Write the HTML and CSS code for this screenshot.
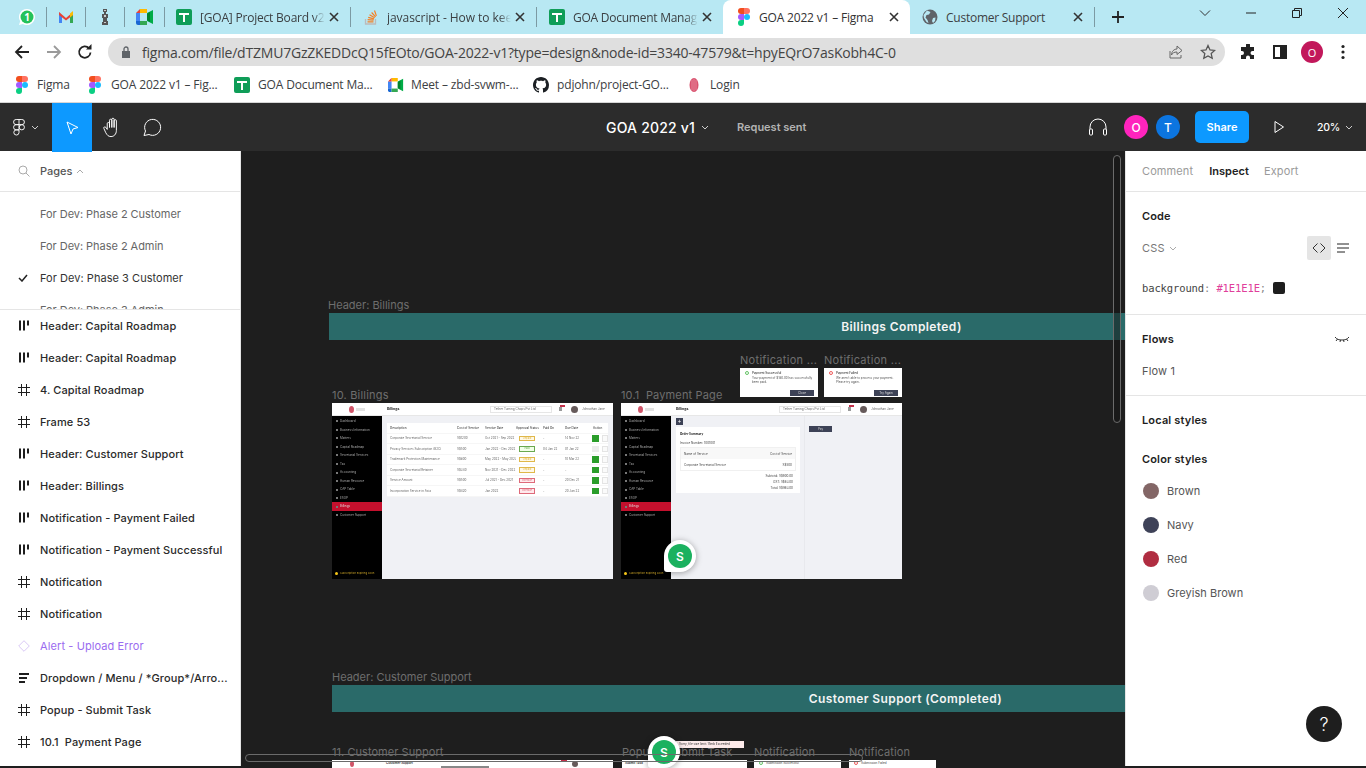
FILE: index.html
```html
<!DOCTYPE html>
<html lang="en">
<head>
<meta charset="utf-8">
<title>GOA 2022 v1 – Figma</title>
<link rel="stylesheet" href="styles.css">
</head>
<body>
<svg class="defs" width="0" height="0" aria-hidden="true">
  <defs>
    <symbol id="figma" viewBox="0 0 12 18">
      <path fill="#f24e1e" d="M3 0h3v6H3a3 3 0 0 1 0-6z"/>
      <path fill="#ff7262" d="M6 0h3a3 3 0 0 1 0 6H6z"/>
      <path fill="#a259ff" d="M3 6h3v6H3a3 3 0 0 1 0-6z"/>
      <circle fill="#1abcfe" cx="9" cy="9" r="3"/>
      <path fill="#0acf83" d="M3 12h3v3a3 3 0 1 1-3-3z"/>
    </symbol>
    <symbol id="sheet" viewBox="0 0 16 16">
      <rect width="16" height="16" rx="2" fill="#0f9d58"/>
      <path fill="#fff" d="M3 4h10v2H9v7H7V6H3z"/>
    </symbol>
    <symbol id="meet" viewBox="0 0 18 16">
      <path fill="#ffba00" d="M4 0h7v4H4z"/>
      <path fill="#4285f4" d="M0 4h4v8H0z"/>
      <path fill="#1967d2" d="M0 12h4v4H2a2 2 0 0 1-2-2z"/>
      <path fill="#34a853" d="M4 12h7v4H4z"/>
      <path fill="#00ac47" d="M11 4v8l6 3V1z"/>
      <path fill="#00832d" d="M11 5l3-2v10l-3-2z"/>
      <path fill="#ea4335" d="M4 0v4H0z"/>
    </symbol>
    <symbol id="close" viewBox="0 0 10 10">
      <path d="M1 1l8 8M9 1L1 9" stroke="#333" stroke-width="1.6" fill="none"/>
    </symbol>
    <symbol id="chev" viewBox="0 0 8 5">
      <path d="M1 1l3 3 3-3" stroke="currentColor" fill="none"/>
    </symbol>
    <symbol id="hash" viewBox="0 0 12 12">
      <path d="M3.500 0v12M8.500 0v12M0 3.500h12M0 8.500h12" stroke="#1e1e1e" fill="none"/>
    </symbol>
    <symbol id="cols" viewBox="0 0 12 12">
      <path d="M1 1h2v10H1zM5 1h2v10H5zM9 1h2v5H9z" fill="#1e1e1e" transform="translate(0 -0.500)"/>
    </symbol>
    <symbol id="rows" viewBox="0 0 12 12">
      <path d="M1 1h10v2H1zM1 5h8v2H1zM1 9h6v2H1z" fill="#1e1e1e"/>
    </symbol>
    <symbol id="diamond" viewBox="0 0 12 12">
      <path d="M6 .7L11.300 6 6 11.300.7 6z" fill="none" stroke="#d9c8f5"/>
    </symbol>
  </defs>
</svg>

<header class="tabstrip">
  <div class="pin">
    <svg class="ic16" viewBox="0 0 16 16"><path fill="#fff" d="M8 0a8 8 0 0 0-6.800 12.200L0 16l3.900-1.100A8 8 0 1 0 8 0z"/><circle cx="8" cy="8" r="6.500" fill="#25c25a"/><text x="8" y="11.500" class="wa-num">1</text></svg>
  </div>
  <div class="pin">
    <svg class="ic16" viewBox="0 0 16 16"><path d="M1 3v11h3V7z" fill="#4285f4"/><path d="M15 3v11h-3V7z" fill="#34a853"/><path d="M1 3l7 6 7-6v3L8 11.500 1 6z" fill="#ea4335"/><path d="M12 4.500L15 2v4l-3 2.500z" fill="#fbbc04"/></svg>
  </div>
  <div class="pin">
    <svg class="ic16" viewBox="0 0 16 16"><path fill="#555" d="M6 0h4v3H9v2h2v4h-1v3h1v4H5v-3h1V9H5V5h2V3H6z"/><path fill="#ccc" d="M7 1h2v1H7zM7 6h2v2H7zM7 13h2v1H7z"/></svg>
  </div>
  <div class="pin pin-last">
    <svg class="ic18" viewBox="0 0 18 16"><use href="#meet"/></svg>
  </div>
  <div class="tab tab-first tab-sep">
    <svg class="ic16"><use href="#sheet"/></svg>
    <span class="tab-title tab-fade tab-board">[GOA] Project Board v2</span>
    <svg class="tab-x"><use href="#close"/></svg>
  </div>
  <div class="tab tab-sep">
    <svg class="ic16" viewBox="0 0 16 16"><path d="M2.500 10v5h10v-5" fill="none" stroke="#bcbbbb" stroke-width="1.300"/><path d="M4.500 12.800h6M4.600 10.600l6 .6M5.200 8.300l5.800 1.600M6.500 5.800l5.200 3M8.600 3.500l4 4.300M11.500 1.500l1.900 5.400" stroke="#f48024" stroke-width="1.200" fill="none"/></svg>
    <span class="tab-title tab-fade tab-so">javascript - How to kee</span>
    <svg class="tab-x"><use href="#close"/></svg>
  </div>
  <div class="tab">
    <svg class="ic16"><use href="#sheet"/></svg>
    <span class="tab-title tab-fade">GOA Document Manag</span>
    <svg class="tab-x"><use href="#close"/></svg>
  </div>
  <div class="tab tab-active">
    <svg class="ic-figma"><use href="#figma"/></svg>
    <span class="tab-title">GOA 2022 v1 – Figma</span>
    <svg class="tab-x"><use href="#close"/></svg>
  </div>
  <div class="tab tab-sep tab-last">
    <svg class="ic16" viewBox="0 0 16 16"><circle cx="8" cy="8" r="7.500" fill="#5f6368"/><path fill="#b8e8f3" d="M5 1.500L8.500 3 7 5.500 4.500 6l-1 2.500L5.500 11l1 3-2-1-2.500-4-.5-3zM11 9l2.500-.5L13 12l-2 2-1-2z"/></svg>
    <span class="tab-title">Customer Support</span>
    <svg class="tab-x"><use href="#close"/></svg>
  </div>
  <svg class="new-tab" viewBox="0 0 14 14"><path d="M7 1v12M1 7h12" stroke="#222" stroke-width="1.800"/></svg>
  <div class="win">
    <svg class="win-ic" viewBox="0 0 12 12"><path d="M1 3.500l5 5 5-5" fill="none" stroke="#333"/></svg>
    <svg class="win-ic" viewBox="0 0 12 12"><path d="M1 6h10" stroke="#222" stroke-width="1"/></svg>
    <svg class="win-ic" viewBox="0 0 12 12"><path d="M1.500 3.500h7v7h-7zM3.500 3.500v-2h7v7h-2" fill="none" stroke="#222"/></svg>
    <svg class="win-ic" viewBox="0 0 12 12"><path d="M1 1l10 10M11 1L1 11" stroke="#222"/></svg>
  </div>
</header>

<div class="navbar">
  <svg class="nav-ic nav-back" viewBox="0 0 16 16"><path d="M15 8H2M8 2L2 8l6 6" fill="none" stroke="#222" stroke-width="1.800"/></svg>
  <svg class="nav-ic nav-fwd" viewBox="0 0 16 16"><path d="M1 8h13M8 2l6 6-6 6" fill="none" stroke="#9a9a9a" stroke-width="1.800"/></svg>
  <svg class="nav-ic nav-reload" viewBox="0 0 16 16"><path d="M13.500 8.500A5.700 5.700 0 1 1 12 4.200" fill="none" stroke="#222" stroke-width="1.800"/><path d="M9 5.500h5.500V0z" fill="#222"/></svg>
  <div class="omni">
    <svg class="lock" viewBox="0 0 10 12"><path fill="#5f6368" d="M1 5h8v7H1z"/><path d="M3 5V3a2 2 0 0 1 4 0v2" fill="none" stroke="#5f6368" stroke-width="1.300"/></svg>
    <span class="url">figma.com/file/dTZMU7GzZKEDDcQ15fEOto/GOA-2022-v1?type=design&amp;node-id=3340-47579&amp;t=hpyEQrO7asKobh4C-0</span>
    <svg class="omni-ic" viewBox="0 0 16 16"><path d="M2 7v7h11v-3" fill="none" stroke="#666"/><path d="M9 2l5 4.500-5 4V8C6 8 4.500 9 3.500 11 3.500 7.500 6 5 9 5z" fill="none" stroke="#666"/></svg>
    <svg class="omni-ic" viewBox="0 0 16 16"><path d="M8 1.500l2 4.400 4.700.5-3.500 3.200 1 4.700L8 11.900l-4.200 2.400 1-4.700-3.500-3.200L6 5.900z" fill="none" stroke="#555" stroke-width="1.300"/></svg>
  </div>
  <svg class="nav-ic nav-ext" viewBox="0 0 16 16"><path fill="#222" d="M6 1a2 2 0 0 1 4 0v2h4v4h-1.500a2 2 0 0 0 0 4H14v4h-4v-1.500a2 2 0 0 0-4 0V15H1v-4h1a2 2 0 0 0 0-4H1V3h5z"/></svg>
  <svg class="nav-ic nav-side" viewBox="0 0 14 14"><path fill-rule="evenodd" fill="#222" d="M0 0h14v14H0zM2 2v10h5V2z"/></svg>
  <div class="avatar-o">O</div>
  <svg class="nav-ic nav-more" viewBox="0 0 4 16"><circle cx="2" cy="2.500" r="1.600" fill="#222"/><circle cx="2" cy="8" r="1.600" fill="#222"/><circle cx="2" cy="13.500" r="1.600" fill="#222"/></svg>
</div>

<nav class="bookmarks">
  <div class="bm bm-1"><svg class="ic-figma"><use href="#figma"/></svg><span>Figma</span></div>
  <div class="bm bm-2"><svg class="ic-figma"><use href="#figma"/></svg><span>GOA 2022 v1 – Fig...</span></div>
  <div class="bm bm-3"><svg class="ic16"><use href="#sheet"/></svg><span>GOA Document Ma...</span></div>
  <div class="bm bm-4"><svg class="ic16" viewBox="0 0 18 16"><use href="#meet"/></svg><span>Meet – zbd-svwm-...</span></div>
  <div class="bm bm-5"><svg class="ic16" viewBox="0 0 16 16"><path fill="#1b1f23" d="M8 0C3.580 0 0 3.580 0 8c0 3.540 2.290 6.530 5.470 7.590.4.070.55-.17.55-.38 0-.19-.01-.82-.01-1.490-2.010.37-2.530-.49-2.690-.94-.09-.23-.48-.94-.82-1.130-.28-.15-.68-.52-.01-.53.63-.01 1.080.58 1.230.82.72 1.210 1.870.87 2.330.66.070-.52.28-.87.51-1.070-1.780-.2-3.640-.89-3.640-3.950 0-.87.31-1.590.82-2.150-.08-.2-.36-1.020.08-2.120 0 0 .67-.21 2.200.82.64-.18 1.320-.27 2-.27.68 0 1.360.09 2 .27 1.530-1.040 2.200-.82 2.200-.82.44 1.100.16 1.920.08 2.120.51.56.82 1.270.82 2.150 0 3.070-1.870 3.750-3.650 3.950.29.25.54.73.54 1.480 0 1.070-.01 1.930-.01 2.200 0 .21.15.46.55.38A8.013 8.013 0 0 0 16 8c0-4.420-3.580-8-8-8z"/></svg><span>pdjohn/project-GO...</span></div>
  <div class="bm bm-6"><svg class="ic16" viewBox="0 0 16 16"><ellipse cx="8" cy="8" rx="4.500" ry="7" fill="#d9536f"/><path d="M6 3v10M8 2v12M10 3v10" stroke="#ec9bac" stroke-width=".7"/></svg><span>Login</span></div>
</nav>

<div class="figbar">
  <div class="fig-left">
    <div class="fig-menu">
      <svg class="fig-logo" viewBox="0 0 12 18"><path d="M3 .5h6a2.750 2.750 0 0 1 0 5.500H3A2.750 2.750 0 0 1 3 .5zM3 6h3v5.500H3A2.750 2.750 0 0 1 3 6zM3 11.500h3v3A2.750 2.750 0 1 1 3 11.500zM6 .5V6" fill="none" stroke="#fff"/><circle cx="9" cy="8.750" r="2.750" fill="none" stroke="#fff"/></svg>
      <svg class="chev chev-light"><use href="#chev"/></svg>
    </div>
    <div class="tool tool-on"><svg class="tool-ic" viewBox="0 0 18 18"><path d="M4 3l11 5.500-5 1.500-2 5z" fill="none" stroke="#fff"/></svg></div>
    <div class="tool"><svg class="tool-ic-l" viewBox="0 0 20 22"><path d="M5 13V7a1.200 1.200 0 0 1 2.400 0v4V3.500a1.200 1.200 0 0 1 2.400 0V11 2.500a1.200 1.200 0 0 1 2.400 0V11 4a1.200 1.200 0 0 1 2.400 0v10c0 4-2.500 6.500-5.600 6.500-3 0-4-1.500-5.500-4L1.500 12c-.7-1.300 1-2.300 2-1.200z" fill="none" stroke="#fff"/></svg></div>
    <div class="tool"><svg class="tool-ic-l" viewBox="0 0 20 20"><path d="M2 18l1.500-4.500A8 8 0 1 1 7 17z" fill="none" stroke="#fff" stroke-linejoin="round"/></svg></div>
  </div>
  <div class="fig-center">
    <span class="fig-title">GOA 2022 v1</span>
    <svg class="chev chev-light"><use href="#chev"/></svg>
    <span class="fig-status">Request sent</span>
  </div>
  <div class="fig-right">
    <svg class="headset" viewBox="0 0 20 20"><path d="M2 16v-6a8 8 0 0 1 16 0v6" fill="none" stroke="#fff"/><rect x="1.500" y="12" width="3" height="6" rx="1" fill="#2c2c2c" stroke="#fff"/><rect x="15.500" y="12" width="3" height="6" rx="1" fill="#2c2c2c" stroke="#fff"/></svg>
    <div class="user user-o">O</div>
    <div class="user user-t">T</div>
    <div class="share">Share</div>
    <svg class="play" viewBox="0 0 12 14"><path d="M2 1.500l8.500 5.500L2 12.500z" fill="none" stroke="#fff"/></svg>
    <span class="zoom">20%</span>
    <svg class="chev chev-light"><use href="#chev"/></svg>
  </div>
</div>

<main class="workspace">
  <aside class="left">
    <div class="pages-head">
      <svg class="search" viewBox="0 0 12 12"><circle cx="5" cy="5" r="4" fill="none" stroke="#aaa"/><path d="M8 8l3.500 3.500" stroke="#aaa"/></svg>
      <span class="pages-title">Pages</span>
      <svg class="chev chev-up"><use href="#chev"/></svg>
    </div>
    <div class="pages">
      <div class="page">For Dev: Phase 2 Customer</div>
      <div class="page">For Dev: Phase 2 Admin</div>
      <div class="page page-on"><svg class="check" viewBox="0 0 10 8"><path d="M1 4l3 3 5-6" fill="none" stroke="#222" stroke-width="1.500"/></svg>For Dev: Phase 3 Customer</div>
      <div class="page">For Dev: Phase 3 Admin</div>
    </div>
    <div class="layers">
      <div class="layer"><svg class="lay-ic"><use href="#cols"/></svg>Header: Capital Roadmap</div>
      <div class="layer"><svg class="lay-ic"><use href="#cols"/></svg>Header: Capital Roadmap</div>
      <div class="layer"><svg class="lay-ic"><use href="#hash"/></svg>4. Capital Roadmap</div>
      <div class="layer"><svg class="lay-ic"><use href="#hash"/></svg>Frame 53</div>
      <div class="layer"><svg class="lay-ic"><use href="#cols"/></svg>Header: Customer Support</div>
      <div class="layer"><svg class="lay-ic"><use href="#cols"/></svg>Header: Billings</div>
      <div class="layer"><svg class="lay-ic"><use href="#cols"/></svg>Notification - Payment Failed</div>
      <div class="layer"><svg class="lay-ic"><use href="#cols"/></svg>Notification - Payment Successful</div>
      <div class="layer"><svg class="lay-ic"><use href="#hash"/></svg>Notification</div>
      <div class="layer"><svg class="lay-ic"><use href="#hash"/></svg>Notification</div>
      <div class="layer layer-comp"><svg class="lay-ic"><use href="#diamond"/></svg>Alert - Upload Error</div>
      <div class="layer"><svg class="lay-ic"><use href="#rows"/></svg>Dropdown / Menu / *Group*/Arro...</div>
      <div class="layer"><svg class="lay-ic"><use href="#hash"/></svg>Popup - Submit Task</div>
      <div class="layer"><svg class="lay-ic"><use href="#hash"/></svg>10.1  Payment Page</div>
    </div>
  </aside>

  <section class="canvas">
    <span class="label l-hb">Header: Billings</span>
    <div class="banner b-bill">Billings Completed)</div>

    <span class="label l-n1">Notification ...</span>
    <span class="label l-n2">Notification ...</span>
    <span class="label l-10">10. Billings</span>
    <span class="label l-101">10.1  Payment Page</span>

    <div class="note n-ok">
      <div class="note-t"><i class="dot dot-g"></i>Payment Successful</div>
      <p>Your payment of $180.00 has successfully been paid.</p>
      <b class="note-b">Close</b>
    </div>
    <div class="note n-bad">
      <div class="note-t"><i class="dot dot-r"></i>Payment Failed</div>
      <p>We aren't able to process your payment. Please try again.</p>
      <b class="note-b">Try Again</b>
    </div>

    <div class="frame f-bill">
      <div class="fh">
        <div class="fh-logo"><i></i></div>
        <strong>Billings</strong>
        <span class="fh-sel">Tether Turning Chops Pvt Ltd</span>
        <i class="fh-bell"></i>
        <i class="fh-ava"></i>
        <span class="fh-name">Johnathan Jane</span>
      </div>
      <div class="fb">
        <div class="side">
          <span>Dashboard</span><span>Business Information</span><span>Matters</span><span>Capital Roadmap</span><span>Secretarial Services</span><span>Tax</span><span>Accounting</span><span>Human Resource</span><span>CAP Table</span><span>ESOP</span><span class="side-on">Billings</span><span>Customer Support</span>
          <em>Subscription Expiring Soon</em>
        </div>
        <div class="content">
          <div class="bill-card">
            <div class="brow brow-h"><span>Description</span><span>Cost of Service</span><span>Service Date</span><span>Approval Status</span><span>Paid On</span><span>Due Date</span><span class="act-h">Action</span></div>
            <div class="brow"><span>Corporate Secretarial Service</span><span>S$1200</span><span>Oct 2021 - Sep 2022</span><span class="bdg bdg-y">Unpaid</span><span>-</span><span>14 Nov 22</span><span class="acts"><i class="act-g"></i><i class="act-l"></i></span></div>
            <div class="brow"><span>Privacy Services Subscription (B2C)</span><span>S$500</span><span>Jan 2022 - Dec 2022</span><span class="bdg bdg-g">Paid</span><span>04 Jan 22</span><span>01 Jan 22</span><span class="acts"><i class="act-d"></i><i class="act-l"></i></span></div>
            <div class="brow"><span>Trademark Protection Maintenance</span><span>S$800</span><span>May 2022 - May 2023</span><span class="bdg bdg-y">Unpaid</span><span>-</span><span>10 Mar 22</span><span class="acts"><i class="act-g"></i><i class="act-l"></i></span></div>
            <div class="brow"><span>Corporate Secretarial Retainer</span><span>S$340</span><span>Nov 2021 - Dec 2022</span><span class="bdg bdg-y">Unpaid</span><span>-</span><span>-</span><span class="acts"><i class="act-g"></i><i class="act-l"></i></span></div>
            <div class="brow"><span>Service Amount</span><span>S$500</span><span>Jul 2021 - Dec 2021</span><span class="bdg bdg-r">Overdue</span><span>-</span><span>20 Dec 21</span><span class="acts"><i class="act-g"></i><i class="act-l"></i></span></div>
            <div class="brow"><span>Incorporation Service in Asia</span><span>S$420</span><span>Jan 2022</span><span class="bdg bdg-r">Overdue</span><span>-</span><span>20 Jan 22</span><span class="acts"><i class="act-g"></i><i class="act-l"></i></span></div>
          </div>
        </div>
      </div>
    </div>

    <div class="frame f-pay">
      <div class="fh">
        <div class="fh-logo"><i></i></div>
        <strong>Billings</strong>
        <span class="fh-sel">Tether Turning Chops Pvt Ltd</span>
        <i class="fh-bell"></i>
        <i class="fh-ava"></i>
        <span class="fh-name">Johnathan Jane</span>
      </div>
      <div class="fb">
        <div class="side">
          <span>Dashboard</span><span>Business Information</span><span>Matters</span><span>Capital Roadmap</span><span>Secretarial Services</span><span>Tax</span><span>Accounting</span><span>Human Resource</span><span>CAP Table</span><span>ESOP</span><span class="side-on">Billings</span><span>Customer Support</span>
          <em>Subscription Expiring Soon</em>
        </div>
        <div class="content content-pay">
          <div class="pay-main">
            <i class="pay-back">+</i>
            <div class="order">
              <strong>Order Summary</strong>
              <div class="inv">Invoice Number:  1001001</div>
              <div class="ord-t">
                <div class="ord-r ord-h"><span>Name of Service</span><span>Cost of Service</span></div>
                <div class="ord-r"><span>Corporate Secretarial Service</span><span>S$500</span></div>
              </div>
              <div class="tot"><span>Subtotal:  S$900.00</span><span>GST:  S$63.00</span><span>Total:  S$963.00</span></div>
            </div>
          </div>
          <div class="pay-side"><b class="pay-btn">Pay</b></div>
        </div>
      </div>
    </div>

    <div class="cursor c-one"><span>S</span></div>

    <span class="label l-hc">Header: Customer Support</span>
    <div class="banner b-cust">Customer Support (Completed)</div>

    <span class="label l-11">11. Customer Support</span>
    <span class="label l-pop">Popup - Submit Task</span>
    <span class="label l-n3">Notification</span>
    <span class="label l-n4">Notification</span>

    <div class="stub s-a"><i class="stub-logo"></i><strong>Customer Support</strong><i class="stub-dark"></i><i class="stub-bell"></i><i class="stub-ava"></i></div>
    <div class="stub s-b"><strong>Submit Task</strong></div>
    <div class="stub s-c"><i class="dot dot-g"></i>Submission Successful</div>
    <div class="stub s-d"><i class="dot dot-r"></i>Submission Failed</div>

    <div class="pink">Sorry, file size limit: 15mb Exceeded</div>
    <div class="cursor c-two"><span>S</span></div>

    <div class="vscroll"></div>
    <div class="hscroll"></div>
  </section>

  <aside class="right">
    <div class="tabs3"><span class="t-mute">Comment</span><span class="t-on">Inspect</span><span class="t-mute t-export">Export</span></div>
    <div class="r-sec r-code">
      <h3>Code</h3>
      <div class="css-row">
        <span class="css-name">CSS</span>
        <svg class="chev chev-up flip"><use href="#chev"/></svg>
        <div class="code-btn"><svg class="code-ic" viewBox="0 0 14 12"><path d="M5.500 1.500L1 6l4.500 4.500M8.500 1.500L13 6l-4.500 4.500" fill="none" stroke="#333"/></svg></div>
        <svg class="list-ic" viewBox="0 0 12 10"><path d="M0 1h12M0 5h12M0 9h8" stroke="#222"/></svg>
      </div>
      <div class="code-line"><span class="code-text"><span class="c-prop">background</span><span class="c-p">:</span> <span class="c-val">#1E1E1E</span><span class="c-p">;</span></span><i class="c-swatch"></i></div>
    </div>
    <div class="r-sec r-flows">
      <div class="flows-h"><h3>Flows</h3><svg class="eye" viewBox="0 0 14 7"><path d="M0 1c2 2.500 4 3 7 3s5-.5 7-3M2.500 3L1 5M5.500 4L5 6M8.500 4L9 6M11.500 3L13 5" fill="none" stroke="#333"/></svg></div>
      <div class="flow1">Flow 1</div>
    </div>
    <div class="r-sec r-styles">
      <h3>Local styles</h3>
      <h3 class="h-color">Color styles</h3>
      <div class="sw"><i class="sw-brown"></i>Brown</div>
      <div class="sw"><i class="sw-navy"></i>Navy</div>
      <div class="sw"><i class="sw-red"></i>Red</div>
      <div class="sw"><i class="sw-grey"></i>Greyish Brown</div>
    </div>
    <div class="help">?</div>
  </aside>
</main>
</body>
</html>
```

FILE: styles.css
```css
* { box-sizing: border-box; }
html, body { margin: 0; height: 768px; overflow: hidden; }
body { background: #1e1e1e; font-family: Inter, "Liberation Sans", sans-serif; display: flex; flex-direction: column; }
.defs { position: absolute; }
svg { display: block; flex: none; }
i, em { font-style: normal; }
h3 { margin: 0; font-size: 11px; font-weight: 600; color: #1e1e1e; letter-spacing: .15px; }

/* Chrome */
.ic16 { width: 16px; height: 16px; }
.ic18 { width: 18px; height: 16px; }
.ic-figma { width: 12px; height: 18px; }
.wa-num { font: 700 10px "Open Sans", sans-serif; fill: #fff; text-anchor: middle; }
.tabstrip { height: 34px; background: #b8e8f3; display: flex; padding-left: 8px; flex: none; font-family: "Open Sans", sans-serif; }
.pin { width: 39px; height: 34px; display: flex; align-items: center; justify-content: center; position: relative; border-right: 1px solid #7c9aa3; background-clip: padding-box; }
.pin, .tab-sep { border-image: linear-gradient(#b8e8f3 8px, #7c9aa3 8px, #7c9aa3 26px, #b8e8f3 26px) 1; }
.pin-last { width: 40px; }
.tab { width: 186px; height: 34px; display: flex; align-items: center; padding: 0 11px 0 12px; gap: 8px; font-size: 12px; color: #3c4043; letter-spacing: -.25px; }
.tab-first { padding-left: 11px; }
.tab-sep { border-right: 1px solid #7c9aa3; }
.tab-active { background: #fff; width: 187px; border-radius: 8px 8px 0 0; color: #333; padding-left: 15px; gap: 9px; letter-spacing: -.18px; }
.tab-last { width: 185px; }
.tab-title { flex: 1; min-width: 0; white-space: nowrap; }
.tab-fade { margin-right: -7px; -webkit-mask-image: linear-gradient(90deg, #000 calc(100% - 12px), transparent); mask-image: linear-gradient(90deg, #000 calc(100% - 12px), transparent); }
.tab-board { letter-spacing: -.2px; }
.tab-so { letter-spacing: -.05px; }
.tab-x { width: 10px; height: 10px; margin-left: 3px; }
.new-tab { width: 14px; height: 14px; margin: 10px 0 0 16px; }
.win { margin-left: auto; display: flex; align-items: flex-start; padding: 7px 17px 0 0; gap: 34px; }
.win-ic { width: 12px; height: 12px; }
.navbar { height: 34px; background: #fff; display: flex; align-items: center; flex: none; padding: 2px 0 0 14px; }
.nav-ic { width: 16px; height: 16px; }
.nav-fwd { margin-left: 16px; }
.nav-reload { margin-left: 15px; }
.omni { margin-left: 15px; width: 1117px; height: 28px; border-radius: 14px; background: #dfdfdf; display: flex; align-items: center; padding: 0 9px 0 13px; }
.lock { width: 10px; height: 12px; }
.url { flex: 1; margin-left: 11px; font: 14px "Open Sans", sans-serif; letter-spacing: -.21px; color: #444; white-space: nowrap; overflow: hidden; }
.omni-ic { width: 16px; height: 16px; margin-left: 16px; }
.nav-ext { margin-left: 15px; }
.nav-side { margin-left: 17px; width: 14px; height: 14px; }
.avatar-o { width: 22px; height: 22px; margin-left: 14px; border-radius: 50%; background: #c2185b; color: #fff; font: 11px "Open Sans", sans-serif; display: flex; align-items: center; justify-content: center; }
.nav-more { width: 4px; margin-left: 18px; }
.bookmarks { height: 35px; background: #fff; border-bottom: 1px solid #d6d6d6; display: flex; align-items: center; flex: none; padding: 0 0 1px 16px; font: 12px "Open Sans", sans-serif; color: #3c4043; letter-spacing: -.15px; }
.bm { display: flex; align-items: center; gap: 10px; white-space: nowrap; }
.bm-1 { width: 73px; gap: 9px; }
.bm-2 { width: 145px; }
.bm-3 { width: 154px; gap: 8px; }
.bm-4 { width: 145px; gap: 7px; }
.bm-5 { width: 153px; gap: 8px; }
.bm-6 { gap: 8px; }

/* Figma toolbar */
.figbar { height: 48px; background: #2c2c2c; display: flex; align-items: stretch; flex: none; position: relative; z-index: 2; color: #fff; }
.fig-left { display: flex; width: 480px; }
.fig-menu { width: 52px; display: flex; align-items: center; padding-left: 13px; gap: 6px; }
.fig-logo { width: 12px; height: 17px; }
.chev { width: 8px; height: 5px; }
.chev-light { color: #ccc; }
.tool { width: 40px; height: 49px; display: flex; align-items: center; justify-content: center; }
.tool-on { background: #0d99ff; }
.tool-ic { width: 18px; height: 18px; }
.tool-ic-l { width: 20px; height: 21px; }
.fig-center { display: flex; align-items: center; padding-left: 126px; flex: none; width: 500px; }
.fig-title { font-size: 14px; font-weight: 500; color: #fff; letter-spacing: .2px; }
.fig-center .chev { margin-left: 6px; }
.fig-status { margin-left: 28px; font-size: 11px; font-weight: 600; color: #b3b3b3; letter-spacing: -.02px; }
.fig-right { flex: 1; display: flex; align-items: center; padding-left: 108px; }
.headset { width: 20px; height: 20px; }
.user { width: 24px; height: 24px; border-radius: 50%; display: flex; align-items: center; justify-content: center; font-size: 12px; font-weight: 500; }
.user-o { background: #ff24bd; margin-left: 16px; }
.user-t { background: #0c75e0; margin-left: 8px; }
.share { width: 54px; height: 32px; margin-left: 15px; border-radius: 5px; background: #0d99ff; display: flex; align-items: center; justify-content: center; font-size: 11px; font-weight: 600; }
.play { width: 12px; height: 14px; margin-left: 24px; }
.zoom { margin-left: 32px; font-size: 10.500px; font-weight: 500; letter-spacing: -.2px; }
.fig-right .chev { margin-left: 5px; }

/* Workspace */
.workspace { flex: 1; display: flex; min-height: 0; position: relative; }
.left { width: 241px; height: 615px; background: #fff; border-right: 1px solid #e5e5e5; display: flex; flex-direction: column; flex: none; }
.pages-head { height: 41px; border-bottom: 1px solid #e5e5e5; display: flex; align-items: center; padding-left: 18px; flex: none; }
.search { width: 12px; height: 12px; }
.pages-title { margin-left: 10px; font-size: 11px; font-weight: 500; color: #555; }
.chev-up { color: #aaa; margin-left: 4px; transform: rotate(180deg); }
.chev-up.flip { transform: none; }
.pages { height: 118px; padding-top: 6px; border-bottom: 1px solid #e5e5e5; overflow: hidden; flex: none; }
.page { height: 32px; display: flex; align-items: center; padding-left: 40px; position: relative; font-size: 11px; color: #666; letter-spacing: -.04px; white-space: nowrap; }
.page-on { color: #333; letter-spacing: .04px; }
.check { position: absolute; left: 18px; top: 12px; width: 10px; height: 8px; }
.layers { flex: 1; overflow: hidden; }
.layer { height: 32px; display: flex; align-items: center; padding-left: 40px; position: relative; font-size: 11px; font-weight: 500; color: #2a2a2a; letter-spacing: .1px; white-space: pre; }
.lay-ic { position: absolute; left: 18px; top: 10px; width: 12px; height: 12px; }
.layer-comp { color: #9b6cf0; font-weight: 400; }

/* Canvas */
.canvas { flex: 1; height: 617px; background: #1e1e1e; position: relative; overflow: hidden; }
.label { position: absolute; font-size: 11px; line-height: 14px; color: #6e6e6e; white-space: pre; }
.l-hb { left: 87px; top: 147px; }
.l-n1 { left: 499px; top: 202px; letter-spacing: .3px; }
.l-n2 { left: 583px; top: 202px; letter-spacing: .3px; }
.l-10 { left: 91px; top: 237px; letter-spacing: .2px; }
.l-101 { left: 380px; top: 237px; letter-spacing: .15px; }
.l-hc { left: 91px; top: 519px; }
.l-11 { left: 91px; top: 594px; letter-spacing: .05px; }
.l-pop { left: 381px; top: 594px; letter-spacing: .1px; }
.l-n3 { left: 513px; top: 594px; letter-spacing: .1px; }
.l-n4 { left: 608px; top: 594px; letter-spacing: .1px; }
.banner { position: absolute; height: 27px; background: #2a6a69; color: #f4f4f4; font-size: 12px; font-weight: 600; display: flex; align-items: center; justify-content: center; letter-spacing: .4px; }
.b-bill { left: 88px; top: 162px; width: 1145px; }
.b-cust { left: 91px; top: 534px; width: 1147px; }

.note { position: absolute; top: 217px; width: 78px; height: 29px; background: #fff; padding: 3px 4px; font-size: 3px; line-height: 4px; color: #555; filter: blur(.3px); }
.n-ok { left: 499px; }
.n-bad { left: 583px; }
.note p { margin: 1px 0 0 8px; width: 62px; }
.note-t { display: flex; align-items: center; gap: 3px; color: #333; font-weight: 500; padding-left: 1px; }
.dot { width: 4px; height: 4px; border-radius: 50%; flex: none; display: block; }
.dot-g { border: 1px solid #65c466; }
.dot-r { border: 1px solid #ef5b5b; }
.note-b { position: absolute; right: 4px; bottom: 1px; width: 24px; height: 6px; background: #3d4256; color: #ddd; font-weight: 400; text-align: center; line-height: 6px; }

.frame { position: absolute; top: 252px; width: 281px; height: 176px; background: #f0f1f5; display: flex; flex-direction: column; color: #666; font-size: 3px; white-space: nowrap; filter: blur(.3px); }
.f-bill { left: 91px; }
.f-pay { left: 380px; }
.fh { height: 13px; background: #fff; display: flex; align-items: center; flex: none; border-bottom: 1px solid #e7e7e7; }
.fh-logo { width: 50px; display: flex; align-items: center; justify-content: flex-start; padding-left: 17px; gap: 2px; }
.fh-logo i { width: 5px; height: 7px; border-radius: 50%; background: #d05468; display: block; }
.fh-logo::after { content: ""; width: 9px; height: 3px; background: #e2e2e2; display: block; }
.fh strong { margin-left: 5px; width: 103px; color: #222; font-size: 3.500px; }
.fh-sel { width: 62px; height: 7px; border: 1px solid #e6e6e6; padding-left: 3px; line-height: 5px; }
.fh-bell { width: 3px; height: 4px; margin-left: 7px; background: #999; display: block; position: relative; }
.fh-bell::after { content: ""; position: absolute; left: 1px; top: -2px; width: 5px; height: 2px; background: #c4304a; display: block; }
.fh-ava { width: 7px; height: 7px; margin-left: 9px; border-radius: 50%; background: #665a5a; display: block; }
.fh-name { margin-left: 4px; }
.fb { flex: 1; display: flex; min-height: 0; }
.side { width: 50px; background: #000; color: #aaa; padding-top: 1px; position: relative; flex: none; display: flex; flex-direction: column; }
.side span { height: 8.550px; padding-left: 8px; line-height: 8.550px; flex: none; position: relative; }
.side span::before { content: ""; position: absolute; left: 3.500px; top: 3.250px; width: 2px; height: 2px; background: #777; display: block; }
.side .side-on { background: #c4102d; color: #ddd; }
.side em { position: absolute; left: 3px; bottom: 4px; color: #c9a227; padding-left: 5px; font-size: 2.700px; }
.side em::before { content: ""; position: absolute; left: 0; top: .5px; width: 3px; height: 3px; border-radius: 50%; background: #f5c518; }
.content { flex: 1; min-width: 0; padding: 7px 5px 0 5px; }
.bill-card { height: 74px; background: #fff; }
.brow { height: 10.500px; display: grid; grid-template-columns: 67px 28px 31px 27px 22px 27px 16px; padding-left: 3px; align-items: center; border-bottom: .5px solid #f6f6f6; }
.brow > span { overflow: hidden; }
.brow-h { color: #444; font-weight: 500; }
.brow .acts { display: flex; gap: 3px; overflow: visible; }
.brow .act-h { overflow: visible; padding-left: 1px; }
.brow .bdg { width: 16px; height: 5.500px; line-height: 4.500px; margin-left: 3px; text-align: center; border: .5px solid; font-size: 2.500px; }
.bdg-y { background: #fff8e6; border-color: #fdeec8; color: #e0b84a; }
.bdg-g { background: #f1ffe8; border-color: #a8e08a; color: #6aa84f; }
.bdg-r { background: #ffe9ec; border-color: #f4a9b4; color: #de6a7a; }
.acts i { width: 6.500px; height: 6.500px; display: block; flex: none; }
.act-g { background: #2a9d2a; }
.act-l { background: #fafafa; border: .5px solid #e4e4e4; }
.act-d { background: #ececec; }
.content-pay { display: flex; padding: 0; }
.pay-main { width: 134px; padding: 2px 5px 0 5px; border-right: 1px solid #e8e9ed; flex: none; }
.pay-back { width: 7px; height: 7px; background: #3d4256; color: #fff; display: block; font-size: 6px; line-height: 6px; text-align: center; }
.order { margin-top: 2px; width: 124px; height: 66px; background: #fff; padding: 5px 4px; color: #444; }
.order strong { color: #222; display: block; line-height: 4px; }
.inv { margin-top: 5px; line-height: 4px; }
.ord-t { margin-top: 2px; border: .5px solid #f0f0f0; }
.ord-r { height: 11px; display: flex; justify-content: space-between; align-items: center; padding: 0 3px; }
.ord-h { background: #f8f8f8; }
.tot { margin-top: 3px; display: flex; flex-direction: column; align-items: flex-end; gap: 2px; padding-right: 3px; line-height: 4px; }
.pay-side { padding: 10px 0 0 4px; }
.pay-btn { width: 23px; height: 6px; background: #3d4256; color: #ccc; display: block; text-align: center; font-weight: 400; line-height: 6px; }

.cursor { position: absolute; width: 32px; height: 32px; border-radius: 50% 50% 50% 3px; background: #fff; display: flex; align-items: center; justify-content: center; box-shadow: 0 1px 6px rgba(0,0,0,.35); }
.cursor span { width: 24px; height: 24px; border-radius: 50%; background: #1bb15f; color: #fff; font-size: 12px; font-weight: 600; display: flex; align-items: center; justify-content: center; }
.c-one { left: 423px; top: 389px; }
.c-two { left: 407px; top: 585px; }
.pink { position: absolute; left: 435px; top: 590px; width: 68px; height: 7px; background: #fdeaea; color: #333; font-size: 3px; line-height: 7px; padding-left: 3px; white-space: nowrap; overflow: hidden; filter: blur(.2px); }
.stub { position: absolute; top: 609px; height: 8px; background: #fff; color: #444; font-size: 3px; line-height: 5px; display: flex; align-items: flex-start; gap: 3px; padding: 1px 3px; white-space: nowrap; }
.s-a { left: 91px; width: 281px; padding-left: 18px; }
.s-a strong { margin-left: 29px; }
.stub-logo { width: 4px; height: 6px; background: #d05468; border-radius: 50%; display: block; }
.stub-dark { position: absolute; left: 109px; top: 6px; width: 48px; height: 2px; background: #888; display: block; }
.stub-bell { position: absolute; left: 229px; top: 0; width: 6px; height: 2px; background: #c4304a; display: block; }
.stub-ava { position: absolute; left: 240px; top: 1px; width: 6px; height: 6px; border-radius: 50%; background: #665a5a; display: block; }
.s-b { left: 381px; width: 125px; }
.s-c { left: 513px; width: 87px; padding-left: 5px; }
.s-d { left: 608px; width: 87px; padding-left: 5px; }
.vscroll { position: absolute; left: 872px; top: 4px; width: 8px; height: 268px; border: 1px solid #6b6b6b; border-radius: 4px; background: rgba(20,20,20,.5); }
.hscroll { position: absolute; left: 4px; top: 603px; width: 618px; height: 8px; border: 1px solid #6b6b6b; border-radius: 4px; }

/* Right */
.right { width: 241px; height: 615px; background: #fff; border-left: 1px solid #e5e5e5; flex: none; position: relative; font-size: 11px; }
.tabs3 { height: 41px; border-bottom: 1px solid #e5e5e5; display: flex; align-items: center; padding-left: 16px; gap: 16px; font-size: 11px; letter-spacing: .1px; }
.t-mute { color: #9a9a9a; }
.t-on { color: #222; font-weight: 600; letter-spacing: .06px; }
.t-export { margin-left: -1px; }
.r-sec { border-bottom: 1px solid #e5e5e5; padding-left: 16px; }
.r-code { height: 123px; padding-top: 17px; }
.css-row { margin-top: 13px; height: 24px; display: flex; align-items: center; position: relative; }
.css-name { color: #777; letter-spacing: .2px; }
.css-row .chev { margin-left: 4px; }
.code-btn { position: absolute; left: 165px; top: 0; width: 24px; height: 24px; background: #e5e5e5; border-radius: 2px; display: flex; align-items: center; justify-content: center; }
.code-ic { width: 14px; height: 12px; }
.list-ic { position: absolute; left: 195px; top: 7px; width: 12px; height: 10px; }
.code-line { margin-top: 21px; height: 14px; display: flex; align-items: center; font-family: "DejaVu Sans Mono", "Liberation Mono", monospace; font-size: 10.500px; letter-spacing: -.12px; }
.code-text { white-space: pre; }
.c-prop { color: #444; }
.c-p { color: #888; }
.c-val { color: #e0409a; }
.c-swatch { width: 12px; height: 12px; margin-left: 7px; background: #1e1e1e; border-radius: 2px; display: block; flex: none; }
.r-flows { height: 81px; padding-top: 17px; }
.flows-h { display: flex; align-items: center; justify-content: space-between; padding-right: 17px; }
.eye { width: 14px; height: 7px; }
.flow1 { margin-top: 18px; color: #555; letter-spacing: .15px; }
.r-styles { border: 0; padding-top: 17px; }
.h-color { margin-top: 25px; margin-bottom: 8px; }
.sw { height: 34px; display: flex; align-items: center; gap: 8px; margin-left: 1px; color: #555; letter-spacing: .04px; }
.sw i { width: 16px; height: 16px; border-radius: 50%; display: block; }
.sw-brown { background: #836666; }
.sw-navy { background: #3e4258; }
.sw-red { background: #b02d41; }
.sw-grey { background: #cfcdd4; }
.help { position: absolute; left: 180px; top: 555px; width: 36px; height: 36px; border-radius: 50%; background: #1e1e1e; color: #fff; font-size: 18px; font-weight: 300; display: flex; align-items: center; justify-content: center; }
```
